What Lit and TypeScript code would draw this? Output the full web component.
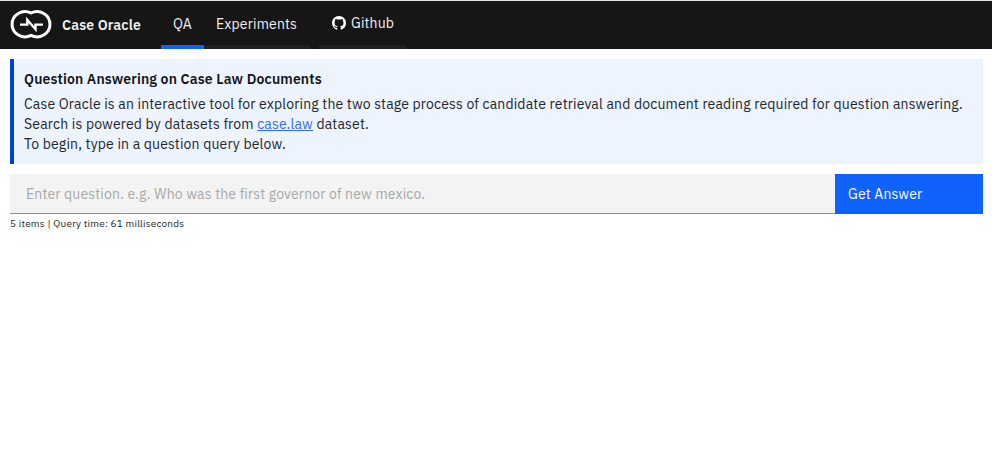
import { LitElement, html, css } from "lit";
import { customElement } from "lit/decorators.js";

@customElement("app-root")
class AppRoot extends LitElement {
  static styles = css`
    :host { display: block; height: 449px; background: #fff; color: #21272a; font: 14px/20px "IBM Plex Sans", Roboto, sans-serif; letter-spacing: 0.16px; overflow: hidden; }
    * { box-sizing: border-box; }
    .header { height: 49px; background: #161616; border-top: 1px solid #dfe3e3; display: flex; color: #f0f0f0; padding-left: 10px; }
    .logo { width: 42px; height: 30px; margin-top: 8px; }
    .brand { margin: 14px 0 0 10px; width: 99px; font-weight: 600; }
    .tab { height: 48px; border-bottom: 4px solid #212121; padding: 13px 12px 0; white-space: nowrap; }
    .tab.active { border-color: #0f62fe; width: 43px; }
    .exp { width: 106px; }
    .git { width: 87px; margin-left: 9px; padding: 12px 0 0 13px; display: flex; }
    .git svg { width: 14px; height: 14px; margin: 3px 5px 0 0; }
    .intro { margin: 10px 9px 0 10px; height: 105px; border-left: 4px solid #0043ce; background: #edf3ff; padding: 10px; white-space: nowrap; }
    .title { color: #121619; font-weight: 600; margin-bottom: 5px; }
    .link { color: #2f6fe8; text-decoration: underline; }
    .search { margin: 10px 9px 0 10px; display: flex; height: 40px; }
    .field { flex: 1; background: #f3f3f3; border-bottom: 1px solid #8d8d8d; color: #a8a8a8; padding: 10px 16px; }
    .go { width: 148px; background: #0f62fe; color: #fff; padding: 10px 13px; }
    .status { margin: 3px 10px; font-size: 10px; line-height: 14px; letter-spacing: 0.2px; }
  `;

  render() {
    return html`
      <header class="header">
        <svg class="logo" viewBox="0 0 42 30" fill="none" stroke="#fff">
          <path d="M21 4A13 12.6 0 1 0 21 26.4A13 12.6 0 1 0 21 4Z" stroke-width="3" />
          <path d="M10 15.6H17.3V11L25.5 20.2V15.6H33" stroke-width="2.4" />
        </svg>
        <div class="brand">Case Oracle</div>
        <div class="tab active">QA</div>
        <div class="tab exp">Experiments</div>
        <div class="tab git">
          <svg viewBox="0 0 16 16" fill="#fff"><path d="M8 0C3.58 0 0 3.58 0 8c0 3.54 2.29 6.53 5.47 7.59.4.07.55-.17.55-.38 0-.19-.01-.82-.01-1.49-2.01.37-2.53-.49-2.69-.94-.09-.23-.48-.94-.82-1.13-.28-.15-.68-.52-.01-.53.63-.01 1.08.58 1.23.82.72 1.21 1.87.87 2.33.66.07-.52.28-.87.51-1.07-1.78-.2-3.64-.89-3.64-3.95 0-.87.31-1.59.82-2.15-.08-.2-.36-1.02.08-2.12 0 0 .67-.21 2.2.82a7.6 7.6 0 0 1 4 0c1.53-1.04 2.2-.82 2.2-.82.44 1.1.16 1.92.08 2.12.51.56.82 1.27.82 2.15 0 3.07-1.87 3.75-3.65 3.95.29.25.54.73.54 1.48 0 1.07-.01 1.93-.01 2.2 0 .21.15.46.55.38A8.01 8.01 0 0 0 16 8c0-4.42-3.58-8-8-8z" /></svg>
          <span>Github</span>
        </div>
      </header>
      <section class="intro">
        <div class="title">Question Answering on Case Law Documents</div>
        <div>Case Oracle is an interactive tool for exploring the two stage process of candidate retrieval and document reading required for question answering.</div>
        <div>Search is powered by datasets from <span class="link">case.law</span> dataset.</div>
        <div>To begin, type in a question query below.</div>
      </section>
      <div class="search">
        <div class="field">Enter question. e.g. Who was the first governor of new mexico.</div>
        <div class="go">Get Answer</div>
      </div>
      <div class="status">5 items | Query time: 61 milliseconds</div>
    `;
  }
}
